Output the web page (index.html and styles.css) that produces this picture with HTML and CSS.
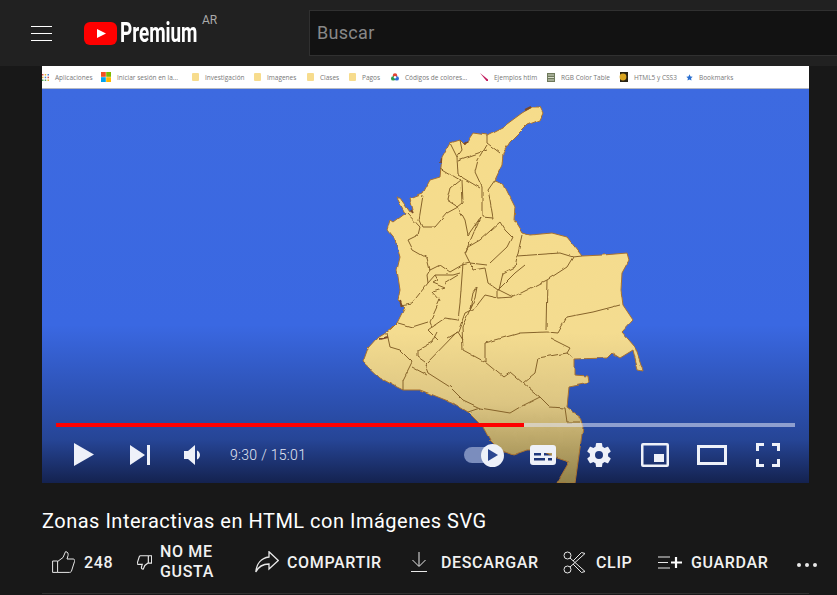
FILE: index.html
```html
<!DOCTYPE html>
<html lang="es">
<head>
    <meta charset="UTF-8">
    <title>Zonas Interactivas en HTML con Imágenes SVG</title>
    <link rel="stylesheet" href="styles.css">
</head>
<body>
    <header class="topbar">
        <div class="menu-btn"><span></span><span></span><span></span></div>
        <div class="logo">
            <svg class="logo-mark" width="33" height="23" viewBox="0 0 33 23"><rect width="33" height="23" rx="6" fill="#f00"/><path d="M13 7l9 4.500-9 4.500z" fill="#fff"/></svg>
            <span class="logo-text">Premium</span>
            <span class="logo-country">AR</span>
        </div>
        <div class="search">Buscar</div>
    </header>

    <main class="content">
        <div class="player">
            <!-- bookmarks bar of the recorded browser -->
            <div class="bookmarks">
                <div class="bm w-apps"><svg width="7" height="7" viewBox="0 0 7 7"><g fill="#d9534f"><rect width="1.500" height="1.500"/><rect x="5.500" y="2.700" width="1.500" height="1.500"/></g><g fill="#e8b93c"><rect x="2.700" width="1.500" height="1.500"/><rect y="2.700" width="1.500" height="1.500"/><rect x="5.500" y="5.500" width="1.500" height="1.500"/></g><g fill="#4a86d8"><rect x="5.500" width="1.500" height="1.500"/><rect x="2.700" y="2.700" width="1.500" height="1.500"/></g><g fill="#58a55c"><rect y="5.500" width="1.500" height="1.500"/><rect x="2.700" y="5.500" width="1.500" height="1.500"/></g></svg>Aplicaciones</div>
                <div class="bm w-ms"><svg width="10" height="10" viewBox="0 0 10 10"><rect width="4.800" height="4.800" fill="#f25022"/><rect x="5.200" width="4.800" height="4.800" fill="#7fba00"/><rect y="5.200" width="4.800" height="4.800" fill="#00a4ef"/><rect x="5.200" y="5.200" width="4.800" height="4.800" fill="#ffb900"/></svg>Iniciar sesión en la...</div>
                <div class="bm w-inv"><span class="folder"></span>Investigación</div>
                <div class="bm w-img"><span class="folder"></span>Imagenes</div>
                <div class="bm w-cla"><span class="folder"></span>Clases</div>
                <div class="bm w-pag"><span class="folder"></span>Pagos</div>
                <div class="bm w-cod"><svg width="8" height="8" viewBox="0 0 8 8"><circle cx="4" cy="2.400" r="2.200" fill="#e34234"/><circle cx="2.200" cy="5.400" r="2.200" fill="#2d9a4b"/><circle cx="5.800" cy="5.400" r="2.200" fill="#2f6fd6"/><circle cx="4" cy="4.300" r="1.200" fill="#fff"/></svg>Códigos de colores...</div>
                <div class="bm w-eje"><svg width="8" height="8" viewBox="0 0 8 8"><path d="M0 0l8 6.500V8H6.500z" fill="#c2185b"/></svg>Ejemplos htlm</div>
                <div class="bm w-rgb"><svg width="8" height="9" viewBox="0 0 8 9"><rect width="8" height="9" fill="#6f7a5c"/><path d="M1 2h6M1 4.500h6M1 7h6" stroke="#d7dccb"/></svg>RGB Color Table</div>
                <div class="bm w-h5"><svg width="10" height="10" viewBox="0 0 10 10"><rect x="2" width="8" height="10" fill="#2a2414"/><circle cx="5" cy="5" r="3.400" fill="#d9a520"/></svg>HTML5 y CSS3</div>
                <div class="bm"><svg width="7" height="7" viewBox="0 0 24 24"><path d="M12 1l3.400 7.400 7.600.9-5.600 5.300 1.500 8L12 18.600 5.100 22.600l1.500-8L1 9.300l7.600-.9z" fill="#2a6fd0"/></svg>Bookmarks</div>
            </div>

            <svg class="frame" viewBox="42 89 767 394" preserveAspectRatio="none">
                <defs>
                    <linearGradient id="sky" gradientUnits="userSpaceOnUse" x1="0" y1="88" x2="0" y2="483">
                        <stop offset="0" stop-color="#3d6ae0"/>
                        <stop offset="0.6" stop-color="#3a68e2"/>
                        <stop offset="0.78" stop-color="#2d52b4"/>
                        <stop offset="0.89" stop-color="#264596"/>
                        <stop offset="1" stop-color="#14224f"/>
                    </linearGradient>
                    <linearGradient id="land" gradientUnits="userSpaceOnUse" x1="0" y1="88" x2="0" y2="483">
                        <stop offset="0" stop-color="#f6dc8a"/>
                        <stop offset="0.62" stop-color="#f4dc90"/>
                        <stop offset="0.8" stop-color="#dcc582"/>
                        <stop offset="1" stop-color="#93824a"/>
                    </linearGradient>
                    <!-- roughens the traced borders so they read as a real map -->
                    <filter id="rough" filterUnits="userSpaceOnUse" x="340" y="95" width="320" height="390">
                        <feTurbulence type="fractalNoise" baseFrequency="0.09" numOctaves="2" seed="4"/>
                        <feDisplacementMap in="SourceGraphic" scale="3" xChannelSelector="R" yChannelSelector="G"/>
                        <feGaussianBlur stdDeviation="0.3"/>
                    </filter>
                </defs>
                <rect x="42" y="88" width="767" height="395" fill="url(#sky)"/>
                <g filter="url(#rough)">
                    <path class="land" d="M543 113 540 120 527 125 517 135 510 142 503 153 502 165 495 180 503 183 510 197 515 207 514 220 522 233 530 235 552 233 567 237 582 256 603 255 627 253 629 260 622 273 621 290 623 305 633 320 622 332 635 347 642 367 643 371 638 370 633 350 620 358 612 353 607 358 574 359 574 375 588 376 589 383 569 387 567 407 580 417 583 427 575 483 557 483 569 462 557 458 540 450 527 450 513 455 500 450 490 440 483 427 468 412 453 403 433 395 420 390 403 390 397 387 380 378 363 362 368 348 377 338 390 330 397 323 405 307 398 300 400 290 397 270 400 257 395 240 387 230 390 220 393 222 405 213 397 198 400 198 410 212 413 210 410 198 423 193 430 180 440 177 442 157 450 143 460 140 465 145 473 133 487 135 503 127 522 113 532 107 540 107Z"/>
                    <g class="borders">
                        <path d="M487 135 487 143 500 153"/>
                        <path d="M487 145 478 160 475 172 482 187 482 217 493 218 490 200 488 190 495 180"/>
                        <path d="M450 143 457 157 458 175 480 188"/>
                        <path d="M460 140 462 150 457 157"/>
                        <path d="M487 150 458 160"/>
                        <path d="M440 168 460 180 450 188 447 200 458 207"/>
                        <path d="M423 195 419 220 422 227 435 227 447 213 458 207 465 220 468 235 480 218"/>
                        <path d="M462 180 463 203 458 207"/>
                        <path d="M407 213 420 227 418 235 408 240 413 250 427 258 430 270 427 275 428 283 412 303 400 305"/>
                        <path d="M430 270 440 265 450 272 462 265 470 263 487 265"/>
                        <path d="M470 263 465 253 480 218"/>
                        <path d="M465 253 468 247 480 240 500 222 505 230 512 237 507 247 490 263"/>
                        <path d="M522 235 517 257 515 267 503 273 499 290 513 297 547 280 567 267 573 257 560 253 517 256"/>
                        <path d="M573 257 582 256"/>
                        <path d="M547 280 546 330"/>
                        <path d="M463 263 460 303 458 320 445 318 432 327 428 330 438 340"/>
                        <path d="M428 283 435 275 453 275 460 273"/>
                        <path d="M435 275 438 280 433 283 445 288 433 292 440 300 430 322 432 327"/>
                        <path d="M445 283 458 275"/>
                        <path d="M398 323 412 327 428 322"/>
                        <path d="M470 263 473 270 485 268 488 283 498 290 498 298 485 295 475 308 465 313 458 332 448 338"/>
                        <path d="M477 287 473 293 470 308 475 298Z"/>
                        <path d="M498 290 515 273 525 265"/>
                        <path d="M498 298 513 297"/>
                        <path d="M458 332 463 340"/>
                        <path d="M473 303 462 327 463 350 485 362 485 343 520 333 547 332 558 333"/>
                        <path d="M558 333 567 317 593 312 620 305"/>
                        <path d="M550 338 570 348 567 353 538 358 535 373 523 383 540 397 550 407 565 408 567 422 580 422"/>
                        <path d="M567 353 573 358"/>
                        <path d="M485 362 503 377 510 372 523 383"/>
                        <path d="M457 332 425 365 428 373 450 387 463 400 480 408 510 413 520 407 540 397"/>
                        <path d="M480 408 468 412"/>
                        <path d="M437 332 432 342 418 350 418 357 425 362"/>
                        <path d="M387 333 390 347 400 350 412 362 403 380 403 390"/>
                        <path d="M412 367 427 375"/>
                    </g>
                    <g class="coast-spots">
                        <path d="M411 210 413 213"/>
                        <path d="M464 144 467 142"/>
                        <path d="M441 158 440 163"/>
                        <path d="M400 300 402 306"/>
                        <path d="M380 339 384 338 388 337"/>
                        <path d="M525 110 531 107"/>
                    </g>
                </g>
            </svg>

            <!-- player controls sit over the video -->
            <div class="controls">
                <div class="progress"><div class="progress-done"></div></div>
                <div class="ctrl-row">
                    <div class="ctrl-left">
                        <svg class="c-play" width="20" height="23" viewBox="0 0 20 23"><path d="M0 0l20 11.500L0 23z"/></svg>
                        <svg class="c-next" width="20" height="20" viewBox="0 0 20 20"><path d="M0 0l15 10L0 20zM17 0h3v20h-3z"/></svg>
                        <svg class="c-vol" width="16" height="20" viewBox="0 0 16 20"><path d="M0 6h4l7-6v20l-7-6H0zM13 5.500c2 1 3 2.700 3 4.500s-1 3.500-3 4.500z"/></svg>
                        <span class="c-time">9:30 / 15:01</span>
                    </div>
                    <div class="ctrl-right">
                        <div class="autoplay">
                            <div class="autoplay-track"></div>
                            <div class="autoplay-knob"><svg width="10" height="12" viewBox="0 0 10 12"><path d="M0 0l10 6-10 6z" fill="#2b4690"/></svg></div>
                        </div>
                        <svg class="c-subs" width="26" height="20" viewBox="0 0 26 20"><path fill-rule="evenodd" d="M3 0h20a3 3 0 013 3v14a3 3 0 01-3 3H3a3 3 0 01-3-3V3a3 3 0 013-3zM4 8v2.500h7V8zM14 8v2.500h8V8zM4 13v2.500h11V13zM18 13v2.500h4V13z"/></svg>
                        <svg class="c-gear" width="24" height="24" viewBox="0 0 24 24"><path fill-rule="evenodd" d="M21 13.200c.1-.4.100-.8.100-1.200s0-.8-.1-1.200l2.500-2c.2-.2.300-.5.100-.7l-2.400-4.100c-.1-.3-.4-.3-.7-.3l-3 1.200c-.6-.5-1.300-.9-2-1.200L15 .6c0-.3-.3-.6-.6-.6H9.600c-.3 0-.5.300-.6.600l-.5 3.100c-.7.3-1.400.7-2 1.200l-3-1.200c-.3-.1-.6 0-.7.300L.4 8.100c-.2.200-.1.500.1.700l2.500 2c-.1.400-.1.800-.1 1.200s0 .8.100 1.200l-2.500 2c-.2.200-.3.500-.1.700l2.400 4.100c.1.300.4.300.7.300l3-1.200c.6.500 1.300.9 2 1.200l.5 3.100c0 .3.300.6.600.6h4.800c.3 0 .5-.3.600-.6l.5-3.100c.7-.3 1.400-.7 2-1.200l3 1.200c.3.100.6 0 .7-.3l2.400-4.100c.2-.2.100-.5-.1-.7zM12 16a4 4 0 110-8 4 4 0 010 8z"/></svg>
                        <svg class="c-mini" width="28" height="24" viewBox="0 0 28 24"><path fill-rule="evenodd" d="M2 0h24a2 2 0 012 2v20a2 2 0 01-2 2H2a2 2 0 01-2-2V2a2 2 0 012-2zM2.500 2.500v19h23v-19zM13 11h10v8H13z"/></svg>
                        <svg class="c-wide" width="30" height="20" viewBox="0 0 30 20"><path fill-rule="evenodd" d="M0 0h30v20H0zM3 3v14h24V3z"/></svg>
                        <svg class="c-full" width="24" height="24" viewBox="0 0 24 24"><path d="M0 0h8v3H3v5H0zM16 0h8v8h-3V3h-5zM0 16h3v5h5v3H0zM21 16h3v8h-8v-3h5z"/></svg>
                    </div>
                </div>
            </div>
        </div>

        <h1 class="title">Zonas Interactivas en HTML con Imágenes SVG</h1>

        <div class="actions">
            <div class="action a-like">
                <svg width="23" height="22" viewBox="0 0 23 22"><path class="ico" d="M.6 10h5v11.400h-5zM5.600 10.500 11 6.500 13.500.7c2.500 0 3 2 2.500 4L15 8h6.200c1.400 0 1.700 1.300 1.300 2.500l-3 9.500c-.4 1-1 1.400-2 1.400H5.600"/></svg>
                <span>248</span>
            </div>
            <div class="action a-dislike">
                <svg width="15" height="15" viewBox="0 0 23 22"><path class="ico ico-thick" d="M22.400 12h-5V.6h5zM17.400 11.500 12 15.500 9.500 21.300c-2.500 0-3-2-2.500-4L8 14H1.800C.4 14 .1 12.700.5 11.500l3-9.500C3.900 1 4.500.6 5.500.6h11.900"/></svg>
                <span class="two-lines">NO ME<br>GUSTA</span>
            </div>
            <div class="action a-share">
                <svg width="24" height="22" viewBox="0 0 24 22"><path class="ico ico-share" d="M14 .8 23.300 9.500 14 18v-5C8 13 3.500 15.500.8 21 1.500 13 6 7 14 6z"/></svg>
                <span>COMPARTIR</span>
            </div>
            <div class="action a-down">
                <svg width="16" height="20" viewBox="0 0 16 20"><path class="ico" d="M8 0v14M1.500 8 8 14.500 14.500 8M0 19.500h16"/></svg>
                <span>DESCARGAR</span>
            </div>
            <div class="action a-clip">
                <svg width="23" height="23" viewBox="0 0 23 23"><g class="ico"><circle cx="4.500" cy="4.500" r="3.500"/><circle cx="4.500" cy="18.500" r="3.500"/><path d="M7 7 22 20.500 18.500 21.500 10 13M7 16 22 2.500 18.500 1.500 10 10"/></g></svg>
                <span>CLIP</span>
            </div>
            <div class="action a-save">
                <svg width="24" height="13" viewBox="0 0 24 13"><path class="ico" d="M0 1h12M0 6.500h10M0 12h12"/><path d="M18 1v11M13 6.500h11" stroke="#fff" stroke-width="2.200" fill="none"/></svg>
                <span>GUARDAR</span>
            </div>
            <div class="action a-more"><i></i><i></i><i></i></div>
        </div>
        <div class="divider"></div>
    </main>
</body>
</html>
```

FILE: styles.css
```css
* {
    box-sizing: border-box;
}
html, body {
    height: 595px;
    overflow: hidden;
}
body {
    margin: 0;
    background-color: #181818;
    color: #fff;
    font-family: Roboto, "Liberation Sans", sans-serif;
}

/* top bar */
.topbar {
    display: flex;
    align-items: center;
    height: 66px;
    background-color: #212121;
    padding-left: 31px;
}
.menu-btn {
    display: flex;
    flex-direction: column;
    gap: 6px;
    width: 21px;
    margin-right: 32px;
}
.menu-btn span {
    height: 1px;
    background-color: #fff;
}
.logo {
    display: flex;
    align-items: center;
    width: 225px;
    position: relative;
}
.logo-text {
    display: inline-block;
    font-size: 27px;
    font-weight: 700;
    margin-left: 3px;
    transform: scaleX(0.7);
    transform-origin: left center;
}
.logo-country {
    position: absolute;
    left: 118px;
    top: -4px;
    font-size: 12px;
    color: #aaaaaa;
}
.search {
    flex: 1;
    height: 46px;
    line-height: 44px;
    padding-left: 7px;
    font-size: 18px;
    letter-spacing: 0.3px;
    color: #888888;
    background-color: #121212;
    border: 1px solid #303030;
    border-right: none;
}

/* video */
.content {
    padding: 0 28px 0 42px;
}
.player {
    position: relative;
    display: flex;
    flex-direction: column;
    height: 417px;
}
.bookmarks {
    display: flex;
    align-items: center;
    height: 23px;
    flex-shrink: 0;
    background-color: #fff;
    border-bottom: 1px solid #b5b9c4;
    font-family: "Open Sans", sans-serif;
    font-size: 6.5px;
    color: #777777;
}
.bm {
    display: flex;
    align-items: center;
    gap: 6px;
    white-space: nowrap;
}
.w-apps { width: 59px; }
.w-ms { width: 91px; }
.w-inv { width: 62px; }
.w-img { width: 53px; }
.w-cla { width: 42px; }
.w-pag { width: 42px; }
.w-cod { width: 89px; }
.w-eje { width: 67px; }
.w-rgb { width: 71px; }
.w-h5 { width: 68px; }
.folder {
    width: 7px;
    height: 8px;
    background-color: #f7dc8d;
    border-radius: 1px;
}
.frame {
    flex: 1;
    width: 100%;
    min-height: 0;
    display: block;
}
.land {
    fill: url(#land);
    stroke: #a8712f;
    stroke-width: 1;
    stroke-linejoin: round;
}
.borders path {
    fill: none;
    stroke: #86632a;
    stroke-width: 1;
    stroke-linejoin: round;
}
.coast-spots path {
    fill: none;
    stroke: #7a4a2a;
    stroke-width: 2;
}

/* controls over the video */
.controls {
    position: absolute;
    left: 14px;
    right: 14px;
    bottom: 0;
    height: 60px;
}
.progress {
    height: 4px;
    background-color: rgba(225, 230, 245, 0.55);
}
.progress-done {
    width: 63.300%;
    height: 100%;
    background-color: #f00;
}
.ctrl-row {
    display: flex;
    justify-content: space-between;
    align-items: center;
    height: 56px;
    padding-bottom: 1px;
}
.ctrl-left, .ctrl-right {
    display: flex;
    align-items: center;
}
.ctrl-row svg {
    fill: #eef1f9;
    display: block;
}
.c-play { margin-left: 18px; }
.c-next { margin-left: 36px; }
.c-vol { margin-left: 34px; }
.c-time {
    margin-left: 30px;
    font-size: 14px;
    font-weight: 300;
    letter-spacing: 0.3px;
    color: #e4e8f4;
}
.ctrl-right {
    padding-right: 15px;
}
.autoplay {
    position: relative;
    width: 40px;
    height: 24px;
}
.autoplay-track {
    position: absolute;
    left: 0;
    top: 4px;
    width: 34px;
    height: 16px;
    border-radius: 8px;
    background-color: #7b8dbd;
}
.autoplay-knob {
    position: absolute;
    right: 0;
    top: 1px;
    width: 23px;
    height: 23px;
    border-radius: 50%;
    background-color: #eef1f9;
    display: flex;
    align-items: center;
    justify-content: center;
}
.c-subs { margin-left: 26px; }
.c-gear { margin-left: 31px; }
.c-mini { margin-left: 30px; }
.c-wide { margin-left: 28px; }
.c-full { margin-left: 29px; }

/* below the video */
.title {
    margin: 27px 0 0;
    font-size: 20px;
    font-weight: 400;
    line-height: 22px;
    letter-spacing: 0.5px;
    color: #fff;
}
.actions {
    display: flex;
    align-items: center;
    height: 42px;
    margin-top: 9px;
    padding-left: 10px;
    font-size: 16px;
    font-weight: 500;
    letter-spacing: 0.65px;
    color: #f1f1f1;
}
.action {
    display: flex;
    align-items: center;
    flex-shrink: 0;
}
.action svg {
    display: block;
    flex-shrink: 0;
}
.ico {
    fill: none;
    stroke: #e8e8e8;
    stroke-width: 1;
}
.ico-thick {
    stroke-width: 1.800;
}
.ico-share {
    stroke-width: 1.300;
}
.two-lines {
    line-height: 20px;
}
.a-like { width: 85px; gap: 9px; }
.a-dislike { width: 118px; gap: 8px; }
.a-share { width: 156px; gap: 8px; }
.a-down { width: 152px; gap: 14px; }
.a-clip { width: 95px; gap: 10px; }
.a-save { width: 139px; gap: 9px; }
.a-more {
    margin-top: 6px;
    gap: 4px;
}
.a-more i {
    width: 4px;
    height: 4px;
    border-radius: 50%;
    background-color: #e8e8e8;
}
.divider {
    height: 1px;
    margin-top: 10px;
    background-color: #303030;
}
```
